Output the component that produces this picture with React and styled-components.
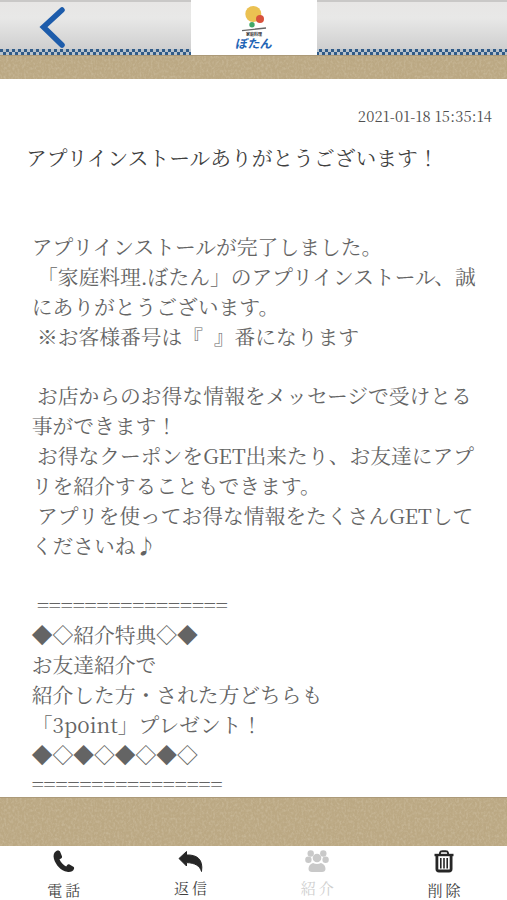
import React from "react";
import styled, { createGlobalStyle } from "styled-components";

const layer = (id, freq, seed, tone, alpha) =>
  `<filter id='${id}' x='0' y='0' width='100%' height='100%'><feTurbulence type='fractalNoise' baseFrequency='${freq}' numOctaves='2' seed='${seed}'/><feColorMatrix values='0 0 0 0 ${tone} 0 0 0 0 ${tone} 0 0 0 0 ${tone} ${alpha} 0 0 0 -${alpha * 0.42}'/></filter><rect width='253' height='60' filter='url(#${id})'/>`;

const weave = `url("data:image/svg+xml,${encodeURIComponent(
  `<svg xmlns='http://www.w3.org/2000/svg' width='253' height='60'>${layer("a", "0.45 0.35", 4, 1, 0.9)}${layer("b", "0.4 0.5", 9, 0.3, 0.9)}</svg>`
)}")`;

const GlobalStyle = createGlobalStyle`
  * {
    box-sizing: border-box;
  }
  body {
    margin: 0;
    background: #ffffff;
    font-family: "Noto Serif CJK JP", "Noto Serif JP", "Liberation Serif", "Noto Sans CJK JP", serif;
  }
`;

const Container = styled.div`
  width: 507px;
  height: 900px;
  display: flex;
  flex-direction: column;
  overflow: hidden;
  background: #ffffff;
`;

const Header = styled.header`
  height: 55px;
  flex: none;
  display: grid;
  grid-template-columns: 191px 126px 190px;
`;

const HeaderSide = styled.div`
  display: flex;
  flex-direction: column;
  border-top: 2px solid #c9c8c7;
  background: linear-gradient(#e7e6e5 0%, #e8e8e7 30%, #d5d5d5 75%, #cacacb 100%);
`;

const HeaderInner = styled.div`
  height: 47px;
  padding: 4px 0 0 39px;
`;

const Checker = styled.div`
  height: 6px;
  background: repeating-conic-gradient(#b9c3cc 0 25%, #315b87 0 50%) ${(props) => props.$shift || 0}px 0 / 6px 6px;
`;

const BackButton = styled.button`
  display: block;
  padding: 0;
  border: none;
  background: none;
  cursor: pointer;
`;

const LogoBox = styled.div`
  background: #ffffff;
  display: flex;
  justify-content: center;
`;

const Fabric = styled.div`
  flex: none;
  height: ${(props) => props.$height}px;
  background: ${weave} #bba883;
  background-blend-mode: soft-light;
  border-top: 1px solid #ac9a79;
`;

const Message = styled.main`
  height: 718px;
  flex: none;
  overflow: hidden;
`;

const SentAt = styled.div`
  padding: 26px 15px 0 0;
  height: 63px;
  font-size: 14.6px;
  line-height: 22px;
  letter-spacing: 0.17px;
  text-align: right;
  color: #505050;
`;

const Title = styled.h1`
  margin: 0;
  padding-left: 26px;
  font-size: 20.75px;
  font-weight: 400;
  line-height: 30px;
  color: #3f3f3f;
`;

const Body = styled.div`
  padding: 60px 0 0 31.7px;
`;

const Line = styled.p`
  margin: 0;
  height: 29.86px;
  font-size: 20.77px;
  line-height: 29.86px;
  letter-spacing: ${(props) => (props.$rule ? "-0.12px" : "normal")};
  white-space: pre;
  color: #646464;
`;

const Toolbar = styled.nav`
  height: 54px;
  flex: none;
  display: grid;
  grid-template-columns: repeat(4, 1fr);
  background: #ffffff;
`;

const Tool = styled.button`
  display: flex;
  flex-direction: column;
  align-items: center;
  padding: 4px 0 0 1px;
  border: none;
  background: none;
  font-family: inherit;
  color: ${(props) => (props.disabled ? "#c9c9c9" : "#262626")};
`;

const ToolLabel = styled.span`
  margin-top: ${(props) => props.$gap || 5}px;
  padding-left: 3px;
  font-size: 15px;
  line-height: 20px;
  letter-spacing: 3px;
  opacity: 0.88;
`;

const BackIcon = () => (
  <svg width="28" height="42" viewBox="0 0 28 42">
    <path d="M23 4 L4.500 21 L23 39" fill="none" stroke="#1d5cab" strokeWidth="5.500" strokeLinecap="round" strokeLinejoin="miter" />
  </svg>
);

const Logo = () => (
  <svg width="48" height="54" viewBox="0 0 48 54">
    <circle cx="23.300" cy="14" r="8" fill="#ebc152" />
    <circle cx="30" cy="19" r="4" fill="#d8513c" />
    <circle cx="22" cy="24.700" r="2.700" fill="#41a869" />
    <path d="M12 30.600 L36 28" stroke="#666666" strokeWidth="1.400" />
    <text x="16" y="36.300" fontSize="4.000" fontWeight="700" fill="#333333" fontFamily="Noto Sans CJK JP, sans-serif">家庭料理</text>
    <text x="13.500" y="48.500" fontSize="12" fontWeight="700" fill="#1d63b5" fontFamily="Noto Sans CJK JP, sans-serif" transform="skewX(-10)" textLength="37" lengthAdjust="spacingAndGlyphs">
      ぼたん
    </text>
  </svg>
);

const PhoneIcon = () => (
  <svg width="23" height="23" viewBox="0 0 24 24">
    <path
      d="M4.500 1C2 2.200 1 5.500 2 9c2 6.800 7.300 12.300 13.800 13.800 3.300.7 6.400-.7 7.200-3.300.2-.8 0-1.500-.7-1.900l-4-2.400c-.9-.5-1.800-.3-2.400.5l-1.100 1.600C12 15.800 9 12.700 7.800 9.600l1.700-.8c.9-.4 1.200-1.300.9-2.200L8.600 2.100C8.100.6 6.300.1 4.500 1z"
      fill="currentColor"
    />
  </svg>
);

const ReplyIcon = () => (
  <svg width="26" height="23" viewBox="0 0 26 23">
    <path
      d="M1 8.500 L8.500 1.500 V5 C18.500 4.500 25.500 9 23.500 21.500 C22 16 17 12.800 8.500 12.600 V16 Z"
      fill="currentColor"
      stroke="currentColor"
      strokeWidth="1"
      strokeLinejoin="round"
    />
  </svg>
);

const GroupIcon = () => (
  <svg width="24" height="23" viewBox="0 0 24 23" fill="currentColor">
    <circle cx="5.700" cy="3.500" r="3.200" />
    <circle cx="18.300" cy="3.500" r="3.200" />
    <circle cx="3.400" cy="9.800" r="3.200" />
    <circle cx="20.600" cy="9.800" r="3.200" />
    <circle cx="12" cy="8" r="4.300" />
    <path d="M8 13 Q12 15 16 13 Q20.500 14.500 20.500 19 Q20.300 22 17 22 H7 Q3.700 22 3.500 19 Q3.500 14.500 8 13Z" />
  </svg>
);

const TrashIcon = () => (
  <svg width="22" height="23" viewBox="0 0 22 23" fill="none" stroke="currentColor" strokeWidth="2">
    <path d="M1.500 5 H20.500" strokeWidth="2.400" />
    <path d="M6.800 4.500 C7 0.500 8.500 1.200 11 1.200 S15 0.500 15.200 4.500" />
    <path d="M3.900 5.500 V19 Q3.900 21 6 21 H16 Q18.100 21 18.100 19 V5.500" strokeWidth="2.800" />
    <path d="M7.800 8 V18.500 M11 8 V18.500 M14.200 8 V18.500" strokeWidth="1.600" />
  </svg>
);

const lines = [
  "アプリインストールが完了しました。",
  " 「家庭料理.ぼたん」のアプリインストール、誠",
  "にありがとうございます。",
  " ※お客様番号は『  』番になります",
  "",
  " お店からのお得な情報をメッセージで受けとる",
  "事ができます！",
  " お得なクーポンをGET出来たり、お友達にアプ",
  "リを紹介することもできます。",
  " アプリを使ってお得な情報をたくさんGETして",
  "くださいね♪",
  "",
  " ================",
  "◆◇紹介特典◇◆",
  "お友達紹介で",
  "紹介した方・された方どちらも",
  "「3point」プレゼント！",
  "◆◇◆◇◆◇◆◇",
  "================",
];

const App = () => {
  return (
    <>
      <GlobalStyle />
      <Container lang="ja">
        <Header>
          <HeaderSide>
            <HeaderInner>
              <BackButton>
                <BackIcon />
              </BackButton>
            </HeaderInner>
            <Checker />
          </HeaderSide>
          <LogoBox>
            <Logo />
          </LogoBox>
          <HeaderSide>
            <HeaderInner />
            <Checker $shift={2} />
          </HeaderSide>
        </Header>
        <Fabric $height={24} />
        <Message>
          <SentAt>2021-01-18 15:35:14</SentAt>
          <Title>アプリインストールありがとうございます！</Title>
          <Body>
            {lines.map((line, i) => (
              <Line key={i} $rule={line.includes("==")}>
                {line}
              </Line>
            ))}
          </Body>
        </Message>
        <Fabric $height={49} />
        <Toolbar>
          <Tool>
            <PhoneIcon />
            <ToolLabel $gap={7}>電話</ToolLabel>
          </Tool>
          <Tool>
            <ReplyIcon />
            <ToolLabel>返信</ToolLabel>
          </Tool>
          <Tool disabled>
            <GroupIcon />
            <ToolLabel>紹介</ToolLabel>
          </Tool>
          <Tool>
            <TrashIcon />
            <ToolLabel $gap={7}>削除</ToolLabel>
          </Tool>
        </Toolbar>
      </Container>
    </>
  );
};

export default App;
